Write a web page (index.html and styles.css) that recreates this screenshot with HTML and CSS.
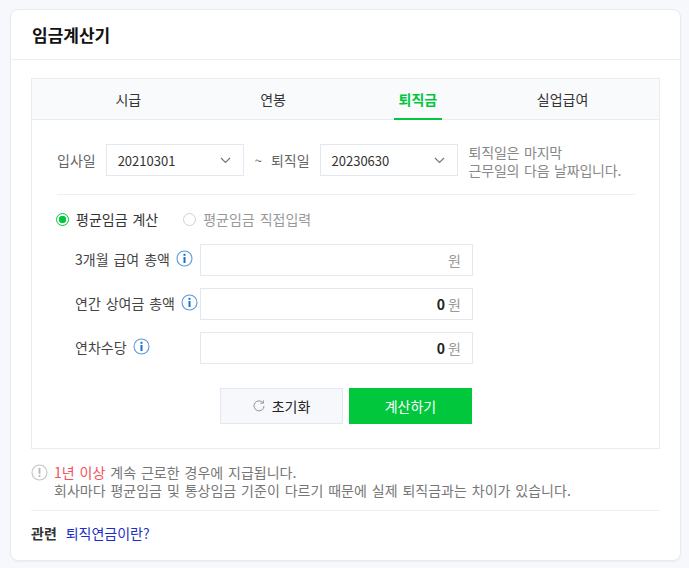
FILE: index.html
```html
<!DOCTYPE html>
<html lang="ko">
<head>
  <meta charset="UTF-8">
  <meta name="viewport" content="width=device-width, initial-scale=1.0">
  <title>임금계산기</title>
  <link rel="stylesheet" href="styles.css">
</head>
<body>
  <div class="card">
    <h2 class="card-title">임금계산기</h2>

    <div class="card-body">
      <div class="calc">
        <!-- Tabs -->
        <div class="tabs">
          <div class="tab"><span>시급</span></div>
          <div class="tab"><span>연봉</span></div>
          <div class="tab active"><span>퇴직금</span></div>
          <div class="tab"><span>실업급여</span></div>
        </div>

        <div class="calc-body">
          <!-- Dates -->
          <div class="date-row">
            <span class="date-label">입사일</span>
            <div class="date-select">
              <span>20210301</span>
              <svg class="chevron" width="11" height="7" viewBox="0 0 11 7"><path d="M1 1l4.5 4.5L10 1" fill="none" stroke="#6f747c" stroke-width="1.1"/></svg>
            </div>
            <span class="tilde">~</span>
            <span class="date-label">퇴직일</span>
            <div class="date-select">
              <span>20230630</span>
              <svg class="chevron" width="11" height="7" viewBox="0 0 11 7"><path d="M1 1l4.5 4.5L10 1" fill="none" stroke="#6f747c" stroke-width="1.1"/></svg>
            </div>
            <p class="date-note">퇴직일은 마지막<br>근무일의 다음 날짜입니다.</p>
          </div>

          <!-- Radios -->
          <div class="radio-row">
            <label class="radio checked"><i></i>평균임금 계산</label>
            <label class="radio"><i></i>평균임금 직접입력</label>
          </div>

          <!-- Amounts -->
          <div class="field">
            <div class="field-label">3개월 급여 총액
              <svg class="info" width="17" height="17" viewBox="0 0 17 17"><circle cx="8.5" cy="8.5" r="7.5" fill="#fff" stroke="#5b9bdc" stroke-width="1.1"/><rect x="7.5" y="3.8" width="2" height="2" fill="#1c6fc9"/><rect x="7.5" y="7" width="2" height="6" fill="#1c6fc9"/></svg>
            </div>
            <div class="amount"><span class="unit">원</span></div>
          </div>
          <div class="field">
            <div class="field-label">연간 상여금 총액
              <svg class="info" width="17" height="17" viewBox="0 0 17 17"><circle cx="8.5" cy="8.5" r="7.5" fill="#fff" stroke="#5b9bdc" stroke-width="1.1"/><rect x="7.5" y="3.8" width="2" height="2" fill="#1c6fc9"/><rect x="7.5" y="7" width="2" height="6" fill="#1c6fc9"/></svg>
            </div>
            <div class="amount"><b>0</b><span class="unit">원</span></div>
          </div>
          <div class="field">
            <div class="field-label">연차수당
              <svg class="info" width="17" height="17" viewBox="0 0 17 17"><circle cx="8.5" cy="8.5" r="7.5" fill="#fff" stroke="#5b9bdc" stroke-width="1.1"/><rect x="7.5" y="3.8" width="2" height="2" fill="#1c6fc9"/><rect x="7.5" y="7" width="2" height="6" fill="#1c6fc9"/></svg>
            </div>
            <div class="amount"><b>0</b><span class="unit">원</span></div>
          </div>

          <div class="buttons">
            <button class="btn btn-reset">
              <svg width="12" height="12" viewBox="0 0 12 12"><path d="M9.6 2.4A5 5 0 1 0 11 6" fill="none" stroke="#8d9197" stroke-width="1"/><path d="M7.4 3.2h3V0.4" fill="none" stroke="#8d9197" stroke-width="1"/></svg>
              초기화
            </button>
            <button class="btn btn-calc">계산하기</button>
          </div>
        </div>
      </div>

      <!-- Notice -->
      <div class="notice">
        <svg class="notice-icon" width="17" height="17" viewBox="0 0 17 17"><circle cx="8.5" cy="8.5" r="7.5" fill="none" stroke="#c4c4c4" stroke-width="1.1"/><rect x="7.6" y="4" width="1.8" height="5.8" fill="#b5b5b5"/><rect x="7.6" y="11" width="1.8" height="1.8" fill="#b5b5b5"/></svg>
        <p><em>1년 이상</em> 계속 근로한 경우에 지급됩니다.<br>회사마다 평균임금 및 통상임금 기준이 다르기 때문에 실제 퇴직금과는 차이가 있습니다.</p>
      </div>

      <div class="related">
        <strong>관련</strong>
        <a href="#">퇴직연금이란?</a>
      </div>
    </div>
  </div>
</body>
</html>
```

FILE: styles.css
```css
* {
  box-sizing: border-box;
}

html, body {
  height: 100%;
}

body {
  margin: 0;
  padding: 9px 8px 0 10px;
  overflow: hidden;
  background-color: #f7f8fb;
  color: #222;
  font-family: "Noto Sans CJK KR", "Noto Sans", sans-serif;
  font-size: 14px;
  word-spacing: 1px;
}

.card {
  height: 552px;
  background: #fff;
  border: 1px solid #e8ebf0;
  border-radius: 8px;
  box-shadow: 0 1px 2px rgba(0, 0, 0, 0.04);
}

.card-title {
  height: 50px;
  margin: 0;
  padding: 0 21px;
  border-bottom: 1px solid #eceef1;
  color: #111;
  font-size: 17px;
  font-weight: 700;
  line-height: 49px;
}

.card-body {
  padding: 18px 20px 0;
}

.calc {
  height: 371px;
  border: 1px solid #e8ebf0;
}

.tabs {
  display: flex;
  height: 41px;
  padding: 0 24px;
  background: #f9fafc;
  border-bottom: 1px solid #e8ebf0;
}

.tab {
  flex: 1;
  text-align: center;
  line-height: 40px;
  color: #333;
}

.tab span {
  display: inline-block;
  height: 41px;
  padding: 0 5px;
}

.tab.active {
  color: #00c73c;
  font-weight: 700;
}

.tab.active span {
  border-bottom: 2px solid #00c73c;
}

.calc-body {
  padding: 24px 24px 0 25px;
}

.date-row {
  display: flex;
  align-items: center;
  height: 51px;
  padding-bottom: 18px;
  border-bottom: 1px solid #eef0f3;
}

.date-label {
  padding-bottom: 1px;
  color: #666;
}

.date-select {
  display: flex;
  align-items: center;
  justify-content: space-between;
  width: 138px;
  height: 32px;
  margin-left: 10px;
  padding: 0 12px 0 11px;
  border: 1px solid #e3e7ef;
  color: #333;
  font-size: 13px;
}

.tilde {
  margin: 0 9px 0 11px;
  color: #666;
  font-size: 13px;
}

.date-note {
  margin: 2px 0 0 11px;
  color: #888;
  letter-spacing: -0.2px;
  line-height: 18px;
}

.radio-row {
  display: flex;
  gap: 25px;
  height: 26px;
  margin: 11px 0 12px -1px;
  align-items: center;
}

.radio {
  display: flex;
  align-items: center;
  gap: 7px;
  color: #999;
}

.radio i {
  width: 13px;
  height: 13px;
  border: 1px solid #d0d0d0;
  border-radius: 50%;
}

.radio.checked {
  color: #333;
}

.radio.checked i {
  border-color: #00c73c;
  background: radial-gradient(circle, #00c73c 0 3.5px, #fff 4px);
}

.field {
  display: flex;
  align-items: center;
  margin-bottom: 12px;
}

.field-label {
  display: flex;
  align-items: center;
  gap: 6px;
  width: 125px;
  margin-left: 18px;
  padding-bottom: 3px;
  color: #444;
  white-space: nowrap;
}

.amount {
  display: flex;
  align-items: center;
  justify-content: flex-end;
  gap: 3px;
  width: 273px;
  height: 32px;
  padding-right: 11px;
  border: 1px solid #e3e7ef;
}

.amount b {
  color: #222;
  font-size: 14px;
}

.unit {
  color: #999;
}

.buttons {
  display: flex;
  gap: 6px;
  margin-top: 24px;
  margin-left: 163px;
}

.btn {
  width: 123px;
  height: 36px;
  border: none;
  font: inherit;
}

.btn-reset {
  display: flex;
  align-items: center;
  justify-content: center;
  gap: 7px;
  background: #f7f8fb;
  border: 1px solid #e3e7ef;
  color: #222;
}

.btn-calc {
  background: #00c73c;
  color: #fff;
}

.notice {
  display: flex;
  gap: 6px;
  margin-top: 14px;
  padding-bottom: 11px;
  border-bottom: 1px solid #eef0f3;
}

.notice-icon {
  margin-top: 1px;
  flex: none;
}

.notice p {
  margin: 0;
  color: #777;
  line-height: 18px;
}

.notice em {
  color: #f4505c;
  font-style: normal;
}

.related {
  margin-top: 13px;
  line-height: 19px;
}

.related strong {
  margin-right: 4px;
  color: #333;
}

.related a {
  color: #1a2fc4;
  text-decoration: none;
}
```
